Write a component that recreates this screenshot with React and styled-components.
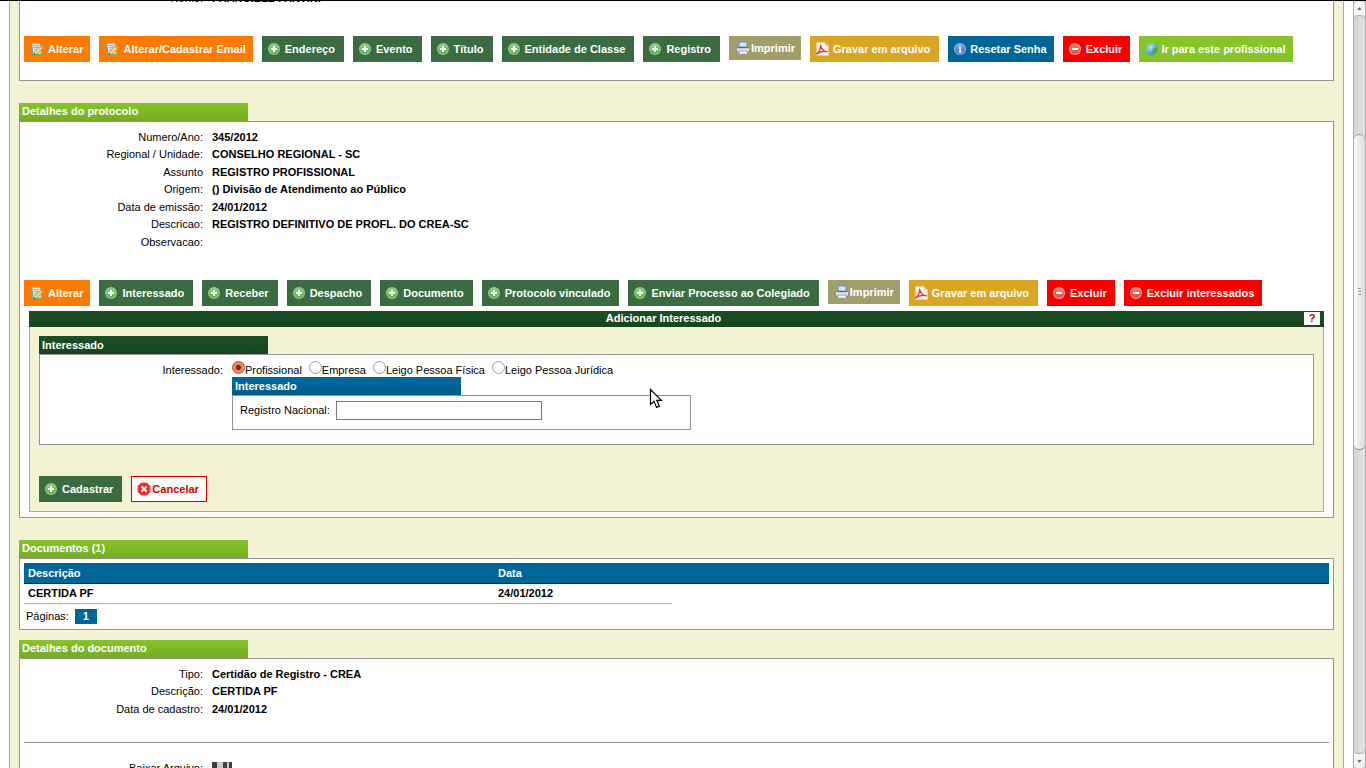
import React from 'react';
import styled, { createGlobalStyle, css } from 'styled-components';

function App() {
    return (
        <WindowStyled>
            <GlobalStyle/>
            <IconDefs/>
            <MainStyled>
                <PageStyled>
                    <Panel $open="top">
                        <FieldList>
                            <dt>Nome:</dt>
                            <dd>FRANCIELE FANTINI</dd>
                        </FieldList>
                        <Toolbar items={personActions}/>
                    </Panel>

                    <Section>
                        <SectionTitle>Detalhes do protocolo</SectionTitle>
                        <Panel $padded>
                            <Fields items={protocolFields}/>
                            <Toolbar items={protocolActions}/>
                            <AddInterested/>
                        </Panel>
                    </Section>

                    <Section>
                        <SectionTitle>Documentos (1)</SectionTitle>
                        <Documents/>
                    </Section>

                    <Section $tight>
                        <SectionTitle>Detalhes do documento</SectionTitle>
                        <Panel $padded $open="bottom">
                            <Fields items={documentFields}/>
                            <Divider/>
                            <FieldList>
                                <dt>Baixar Arquivo:</dt>
                                <dd><a href="/" aria-label="Baixar"><DiskIcon/></a></dd>
                            </FieldList>
                        </Panel>
                    </Section>
                </PageStyled>
            </MainStyled>
            <Scrollbar/>
        </WindowStyled>
    );
}

const personActions = [
    {label: 'Alterar', icon: 'edit', color: 'orange'},
    {label: 'Alterar/Cadastrar Email', icon: 'edit', color: 'orange'},
    {label: 'Endereço', icon: 'add', color: 'green'},
    {label: 'Evento', icon: 'add', color: 'green'},
    {label: 'Título', icon: 'add', color: 'green'},
    {label: 'Entidade de Classe', icon: 'add', color: 'green'},
    {label: 'Registro', icon: 'add', color: 'green'},
    {label: 'Imprimir', icon: 'print', color: 'olive'},
    {label: 'Gravar em arquivo', icon: 'pdf', color: 'gold'},
    {label: 'Resetar Senha', icon: 'info', color: 'blue'},
    {label: 'Excluir', icon: 'remove', color: 'red'},
    {label: 'Ir para este profissional', icon: 'world', color: 'lime'},
];

const protocolActions = [
    {label: 'Alterar', icon: 'edit', color: 'orange'},
    {label: 'Interessado', icon: 'add', color: 'green'},
    {label: 'Receber', icon: 'add', color: 'green'},
    {label: 'Despacho', icon: 'add', color: 'green'},
    {label: 'Documento', icon: 'add', color: 'green'},
    {label: 'Protocolo vinculado', icon: 'add', color: 'green'},
    {label: 'Enviar Processo ao Colegiado', icon: 'add', color: 'green'},
    {label: 'Imprimir', icon: 'print', color: 'olive'},
    {label: 'Gravar em arquivo', icon: 'pdf', color: 'gold'},
    {label: 'Excluir', icon: 'remove', color: 'red'},
    {label: 'Excluir interessados', icon: 'remove', color: 'red'},
];

const protocolFields = [
    ['Numero/Ano:', '345/2012'],
    ['Regional / Unidade:', 'CONSELHO REGIONAL - SC'],
    ['Assunto', 'REGISTRO PROFISSIONAL'],
    ['Origem:', '() Divisão de Atendimento ao Público'],
    ['Data de emissão:', '24/01/2012'],
    ['Descricao:', 'REGISTRO DEFINITIVO DE PROFL. DO CREA-SC'],
    ['Observacao:', ''],
];

const documentFields = [
    ['Tipo:', 'Certidão de Registro - CREA'],
    ['Descrição:', 'CERTIDA PF'],
    ['Data de cadastro:', '24/01/2012'],
];

const interestedTypes = ['Profissional', 'Empresa', 'Leigo Pessoa Física', 'Leigo Pessoa Jurídica'];

function Toolbar({items}) {
    return (
        <ToolbarStyled>
            {items.map((item) => (
                <ActionButton key={item.label} type="button" $color={item.color}>
                    <Icon name={item.icon}/>
                    {item.label}
                </ActionButton>
            ))}
        </ToolbarStyled>
    );
}

function Fields({items}) {
    return (
        <FieldList>
            {items.map(([label, value]) => (
                <React.Fragment key={label}>
                    <dt>{label}</dt>
                    <dd>{value}</dd>
                </React.Fragment>
            ))}
        </FieldList>
    );
}

function AddInterested() {
    return (
        <DialogStyled>
            <DialogHeader>
                <h2>Adicionar Interessado</h2>
                <HelpButton type="button">?</HelpButton>
            </DialogHeader>
            <DialogBody>
                <SectionTitle $color="dark">Interessado</SectionTitle>
                <FormPanel>
                    <FormLabel id="interested-label">Interessado:</FormLabel>
                    <div>
                        <RadioGroup role="radiogroup" aria-labelledby="interested-label">
                            {interestedTypes.map((type, i) => (
                                <label key={type}>
                                    <input type="radio" name="interested" defaultChecked={i === 0}/>
                                    {type}
                                </label>
                            ))}
                        </RadioGroup>
                        <Lookup>
                            <SectionTitle $color="blue">Interessado</SectionTitle>
                            <LookupRow>
                                <label htmlFor="national-id">Registro Nacional:</label>
                                <input id="national-id" type="text"/>
                            </LookupRow>
                            <PointerStyled viewBox="0 0 14 21" aria-hidden="true">
                                <path d="M1.5 1.5V16.5L5 13.3L7.6 19.4L10.4 18.2L7.8 12.3H12.3Z" fill="#fff" stroke="#000" strokeWidth="1.2"/>
                            </PointerStyled>
                        </Lookup>
                    </div>
                </FormPanel>
                <FormActions>
                    <ActionButton type="submit" $color="green"><Icon name="add"/>Cadastrar</ActionButton>
                    <ActionButton type="button" $color="cancel"><Icon name="cancel"/>Cancelar</ActionButton>
                </FormActions>
            </DialogBody>
        </DialogStyled>
    );
}

function Documents() {
    return (
        <Panel>
            <TableStyled>
                <colgroup>
                    <col className="description"/>
                    <col className="date"/>
                    <col/>
                </colgroup>
                <thead>
                    <tr>
                        <th>Descrição</th>
                        <th colSpan={2}>Data</th>
                    </tr>
                </thead>
                <tbody>
                    <tr>
                        <td>CERTIDA PF</td>
                        <td>24/01/2012</td>
                    </tr>
                </tbody>
            </TableStyled>
            <Pages aria-label="Páginas">
                Páginas:
                <a href="/">1</a>
            </Pages>
        </Panel>
    );
}

function Scrollbar() {
    return (
        <ScrollbarStyled aria-hidden="true">
            <ScrollArrow viewBox="0 0 13 14"><path d="M4 9L6.5 6L9 9Z" fill="#555"/></ScrollArrow>
            <ScrollTrack>
                <ScrollThumb><i/><i/><i/></ScrollThumb>
            </ScrollTrack>
            <ScrollArrow viewBox="0 0 13 14" $end><path d="M4 6L6.5 9L9 6Z" fill="#555"/></ScrollArrow>
        </ScrollbarStyled>
    );
}

function IconDefs() {
    return (
        <DefsStyled aria-hidden="true">
            <defs>
                <linearGradient id="g-add" x1="0" y1="0" x2="0" y2="1">
                    <stop offset="0" stopColor="#8fcf86"/>
                    <stop offset="1" stopColor="#5fae4c"/>
                </linearGradient>
                <linearGradient id="g-remove" x1="0" y1="0" x2="0" y2="1">
                    <stop offset="0" stopColor="#f0827a"/>
                    <stop offset="1" stopColor="#dc4a41"/>
                </linearGradient>
                <linearGradient id="g-info" x1="0" y1="0" x2="0" y2="1">
                    <stop offset="0" stopColor="#7da7dc"/>
                    <stop offset="1" stopColor="#3f74bd"/>
                </linearGradient>
                <linearGradient id="g-print" x1="0" y1="0" x2="0" y2="1">
                    <stop offset="0" stopColor="#8d9299"/>
                    <stop offset="0.4" stopColor="#f0f1f3"/>
                    <stop offset="1" stopColor="#b9bdc2"/>
                </linearGradient>
                <radialGradient id="g-world" cx="0.35" cy="0.3" r="0.8">
                    <stop offset="0" stopColor="#d9effa"/>
                    <stop offset="0.5" stopColor="#6fb6e0"/>
                    <stop offset="1" stopColor="#2f7fc0"/>
                </radialGradient>
            </defs>
        </DefsStyled>
    );
}

const drawings = {
    edit: (
        <>
            <path d="M2.6 2.4H11L12.4 13H3.8Z" fill="#e6ebee" stroke="#a3adb3" strokeWidth="0.8"/>
            <path d="M4.4 4.6H10M4.7 6.4H10.2M5 8.2H9.6M5.2 10H8" stroke="#8aa9bd" strokeWidth="0.9"/>
            <path d="M2.6 2.4L3 6L3.8 13H6" stroke="#4c8fc0" strokeWidth="0.9" fill="none"/>
            <path d="M2.4 13.6H14.4" stroke="#6fae5c" strokeWidth="1.2"/>
            <path d="M11.2 5.4L13.8 7.6L8 12.8L4.8 14.2L5.6 11Z" fill="#f8d968" stroke="#a8873a" strokeWidth="0.7"/>
            <path d="M11.2 5.4L12.4 4.4L14.8 6.6L13.8 7.6Z" fill="#e99a86"/>
            <path d="M4.8 14.2L5.3 12.3L6.8 13.4Z" fill="#555"/>
        </>
    ),
    add: (
        <>
            <circle cx="8" cy="8" r="6" fill="#93cb88"/>
            <circle cx="8" cy="8" r="5" fill="url(#g-add)"/>
            <path d="M8 5V11M5 8H11" stroke="#fff" strokeWidth="2"/>
        </>
    ),
    remove: (
        <>
            <circle cx="8" cy="8" r="6" fill="#f0a59d"/>
            <circle cx="8" cy="8" r="5" fill="url(#g-remove)"/>
            <path d="M5 8H11" stroke="#fff" strokeWidth="2"/>
        </>
    ),
    info: (
        <>
            <circle cx="8" cy="8" r="6" fill="#8db1de"/>
            <circle cx="8" cy="8" r="5" fill="url(#g-info)"/>
            <path d="M8 4.2V5.8M7 7H8.2V11M6.8 11H9.4" stroke="#fff" strokeWidth="1.4" fill="none"/>
        </>
    ),
    print: (
        <>
            <path d="M4 8V2H10.5L12 3.5V8Z" fill="#cfe6ff" stroke="#5f95d6"/>
            <path d="M2.5 7H13.5L14.5 8.5V12.5H1.5V8.5Z" fill="url(#g-print)" stroke="#7d8186" strokeWidth="0.8"/>
            <path d="M3.8 7.6H12.2" stroke="#5b6066"/>
            <path d="M3.8 11H12.2V14.2H3.8Z" fill="#fbfbfb" stroke="#8d9094" strokeWidth="0.8"/>
        </>
    ),
    pdf: (
        <>
            <path d="M2.6 1.6H10.6L14.4 5V14.4H2.6Z" fill="#fdf8f4" stroke="#e6cdb4" strokeWidth="0.8"/>
            <path d="M10.6 1.6V5H14.4Z" fill="#d9d3ce"/>
            <path d="M2.2 13.2C5 11.6 7.2 7.4 6.6 3.8C7.2 8 9.6 10.6 13.6 10.9C10 9.8 5.4 10.6 2.2 13.2Z" fill="none" stroke="#d8352a" strokeWidth="1.2"/>
        </>
    ),
    world: (
        <>
            <circle cx="8.5" cy="8" r="6.3" fill="url(#g-world)" stroke="#7fa9a2" strokeWidth="0.6"/>
            <path d="M4 4.4Q6 1.8 9 2L7.6 5L5.4 6.4L5.8 9L3.2 8.6Q2.6 6.4 4 4.4Z" fill="#8cc98a"/>
            <path d="M10 7.4L13.4 6.6Q15 9 12.6 12L10.6 13.2L9.2 10.4Z" fill="#58a64f"/>
        </>
    ),
    cancel: (
        <>
            <path d="M5 1.8H11L14.2 5V11L11 14.2H5L1.8 11V5Z" fill="#ef2b26" stroke="#f98680"/>
            <path d="M5.4 5.4L10.6 10.6M10.6 5.4L5.4 10.6" stroke="#fff" strokeWidth="2"/>
        </>
    ),
};

function Icon({name}) {
    return <IconStyled viewBox="0 0 16 16" aria-hidden="true">{drawings[name]}</IconStyled>;
}

function DiskIcon() {
    return (
        <DiskStyled viewBox="0 0 20 20" aria-hidden="true">
            <path d="M0 0H20V20H0Z" fill="#3c3c3c"/>
            <path d="M5 0H15V9H5Z" fill="#c9c9c9"/>
            <path d="M11 0H15V8H11Z" fill="#444"/>
            <path d="M15 0H17V8H15Z" fill="#c9c9c9"/>
            <path d="M3 12H17V20H3Z" fill="#eee"/>
        </DiskStyled>
    );
}

const GlobalStyle = createGlobalStyle`
  * {
    box-sizing: border-box;
  }

  body {
    margin: 0;
    background: #fff;
    color: #000;
    font-family: "Liberation Sans", Arial, sans-serif;
    font-size: 11px;
  }

  button, input {
    font: inherit;
  }

  h2, dl, dd {
    margin: 0;
  }
`;

const WindowStyled = styled.div`
  display: flex;
  height: 100vh;
  overflow: hidden;
  border-top: 1px solid #000;
`;

const MainStyled = styled.main`
  flex: 1;
  min-width: 0;
  overflow: hidden;
  padding: 0 9px;
`;

/* the document is scrolled past the top of the first panel */
const PageStyled = styled.div`
  margin-top: -11px;
  padding: 0 9px;
  background: #f3f2d5;
  border: solid #aaa;
  border-width: 0 1px;
`;

const Section = styled.section`
  margin-top: ${(props) => (props.$tight ? 10 : 22)}px;
`;

const titleColors = {
    lime: 'linear-gradient(#86c428, #75ac22)',
    dark: 'linear-gradient(#1b4f26, #1a4420)',
    blue: 'linear-gradient(#00699f, #005c8b)',
};

const SectionTitle = styled.h2`
  width: 229px;
  padding-left: 3px;
  background: ${(props) => titleColors[props.$color || 'lime']};
  color: #fff;
  font-size: 11px;
  line-height: 18px;

  ${(props) => !props.$color && css`
    padding-bottom: 2px;
    line-height: 16px;
  `}
`;

const Panel = styled.div`
  padding: ${(props) => (props.$padded ? '7px' : '4px')} 4px 5px;
  background: #fff;
  border: 1px solid #949494;

  ${(props) => props.$open === 'top' && css`
    padding-top: 0;
    padding-bottom: 18px;
    border-top: 0;
  `}
  ${(props) => props.$open === 'bottom' && css`
    border-bottom: 0;
  `}
`;

const FieldList = styled.dl`
  display: grid;
  grid-template-columns: 179px 1fr;
  grid-auto-rows: 17px 18px;
  column-gap: 9px;
  line-height: 17px;

  dt {
    text-align: right;
  }

  dd {
    font-weight: bold;
  }
`;

const Divider = styled.hr`
  margin: 24px 0 17px;
  border: 0;
  border-top: 1px solid #949494;
`;

const ToolbarStyled = styled.div`
  display: flex;
  flex-wrap: wrap;
  align-items: flex-start;
  gap: 9px;
  margin-top: 29px;
`;

const buttonColors = {
    orange: '#ff7b00',
    green: '#3a6b41',
    olive: '#a19e6c',
    gold: '#dba524',
    blue: '#00669a',
    red: '#f60000',
    lime: '#86c428',
    cancel: '#fff',
};

const buttonPadding = {
    orange: '0 7px 0 5px',
    green: '0 9px 0 4px',
    olive: '0 6px',
    gold: '0 9px 0 4px',
    blue: '0 7px 0 4px',
    cancel: '0 7px 0 4px',
};

const ActionButton = styled.button`
  display: flex;
  align-items: center;
  gap: 3px;
  height: 26px;
  padding: ${(props) => buttonPadding[props.$color] || '0 8px 0 4px'};
  border: 0;
  background: ${(props) => buttonColors[props.$color]};
  color: #fff;
  font-weight: bold;
  white-space: nowrap;
  cursor: pointer;

  ${(props) => props.$color === 'olive' && css`
    gap: 0;
    height: 24px;
  `}
  ${(props) => (props.$color === 'lime' || props.$color === 'blue') && css`
    gap: 2px;
  `}
  ${(props) => props.$color === 'cancel' && css`
    gap: 0;
    border: 1px solid #d00000;
    color: #d00000;
  `}
`;

const IconStyled = styled.svg`
  flex: none;
  width: 16px;
  height: 16px;
`;

const DialogStyled = styled.form`
  margin: 5px 5px 0;
`;

const DialogHeader = styled.header`
  display: grid;
  grid-template-columns: 1fr 20px;
  column-gap: 6px;
  height: 16px;
  background: linear-gradient(#1b4f26, #1a4420);
  color: #fff;

  h2 {
    font-size: 11px;
    line-height: 14px;
    text-align: center;
  }
`;

const HelpButton = styled.button`
  width: 16px;
  height: 13px;
  margin-top: 1px;
  padding: 0;
  border: 0;
  background: #fff;
  color: #c00;
  font-weight: bold;
  line-height: 13px;
`;

const DialogBody = styled.div`
  padding: 9px;
  background: #f3f2d5;
  border: 1px solid #aaa;
  border-top: 0;
`;

const FormPanel = styled.div`
  display: grid;
  grid-template-columns: 179px 1fr;
  column-gap: 9px;
  padding: 6px 4px 14px;
  background: #fff;
  border: 1px solid #949494;
`;

const FormLabel = styled.span`
  padding-top: 2px;
  line-height: 14px;
  text-align: right;
`;

const RadioGroup = styled.div`
  display: flex;
  gap: 7px;

  label {
    display: flex;
    align-items: flex-end;
    height: 16px;
    line-height: 14px;
  }

  input {
    appearance: none;
    width: 13px;
    height: 13px;
    margin: 0 0 3px;
    border: 1px solid #a09c98;
    border-radius: 50%;
    background: #fff;

    &:checked {
      border-color: #b5482a;
      background: radial-gradient(circle, #6b2c1c 2px, #f47c54 3px, #f79470 6px);
    }
  }
`;

const Lookup = styled.div`
  position: relative;
  max-width: 459px;
`;

const LookupRow = styled.div`
  display: flex;
  gap: 6px;
  padding: 5px 7px 9px;
  border: 1px solid #949494;
  line-height: 18px;

  input {
    width: 206px;
    height: 19px;
    padding: 0 3px;
    border: 1px solid #7a7a7a;
  }
`;

const PointerStyled = styled.svg`
  position: absolute;
  right: 28px;
  top: 11px;
  width: 14px;
  height: 21px;
`;

const FormActions = styled.div`
  display: flex;
  gap: 9px;
  margin-top: 31px;
`;

const TableStyled = styled.table`
  width: 100%;
  table-layout: fixed;
  border-collapse: separate;
  border-spacing: 0;
  font-weight: bold;
  text-align: left;

  .description {
    width: 470px;
  }

  .date {
    width: 178px;
  }

  th {
    height: 21px;
    padding: 0 4px;
    background: #00669a;
    border-bottom: 1px solid #002b45;
    color: #fff;
  }

  td {
    height: 20px;
    padding: 0 4px 2px;
    border-bottom: 1px solid #aaa;
  }
`;

const Pages = styled.nav`
  display: flex;
  align-items: center;
  gap: 6px;
  margin-top: 5px;
  padding-left: 2px;
  line-height: 15px;

  a {
    padding: 0 8px;
    background: #00669a;
    color: #fff;
    font-weight: bold;
    text-decoration: none;
  }
`;

const DiskStyled = styled.svg`
  display: block;
  width: 20px;
  height: 20px;
  margin-top: 2px;
`;

const DefsStyled = styled.svg`
  position: absolute;
  width: 0;
  height: 0;
`;

const ScrollbarStyled = styled.div`
  display: flex;
  flex-direction: column;
  width: 13px;
  background: #dedad8;
  border: solid #aaa;
  border-width: 0 1px;
`;

const ScrollArrow = styled.svg`
  flex: none;
  width: 100%;
  height: 14px;
  background: #f5f4f3;
  border-radius: ${(props) => (props.$end ? '0 0 6px 6px' : '6px 6px 0 0')};
`;

const ScrollTrack = styled.div`
  flex: 1;
  padding-top: 118px;
  background: linear-gradient(90deg, #d8d4d2, #e4e2e0);
  border: 1px solid #aaa;
  border-width: 1px 0;
  border-radius: 6px;
`;

const ScrollThumb = styled.div`
  display: flex;
  flex-direction: column;
  align-items: center;
  justify-content: center;
  gap: 2px;
  height: 51%;
  background: linear-gradient(90deg, #fbfbfa, #dddad8);
  border: 1px solid #8e8b88;
  border-width: 1px 0;
  border-radius: 6px;

  i {
    width: 3px;
    height: 1px;
    background: #999;
  }
`;

export default App;
